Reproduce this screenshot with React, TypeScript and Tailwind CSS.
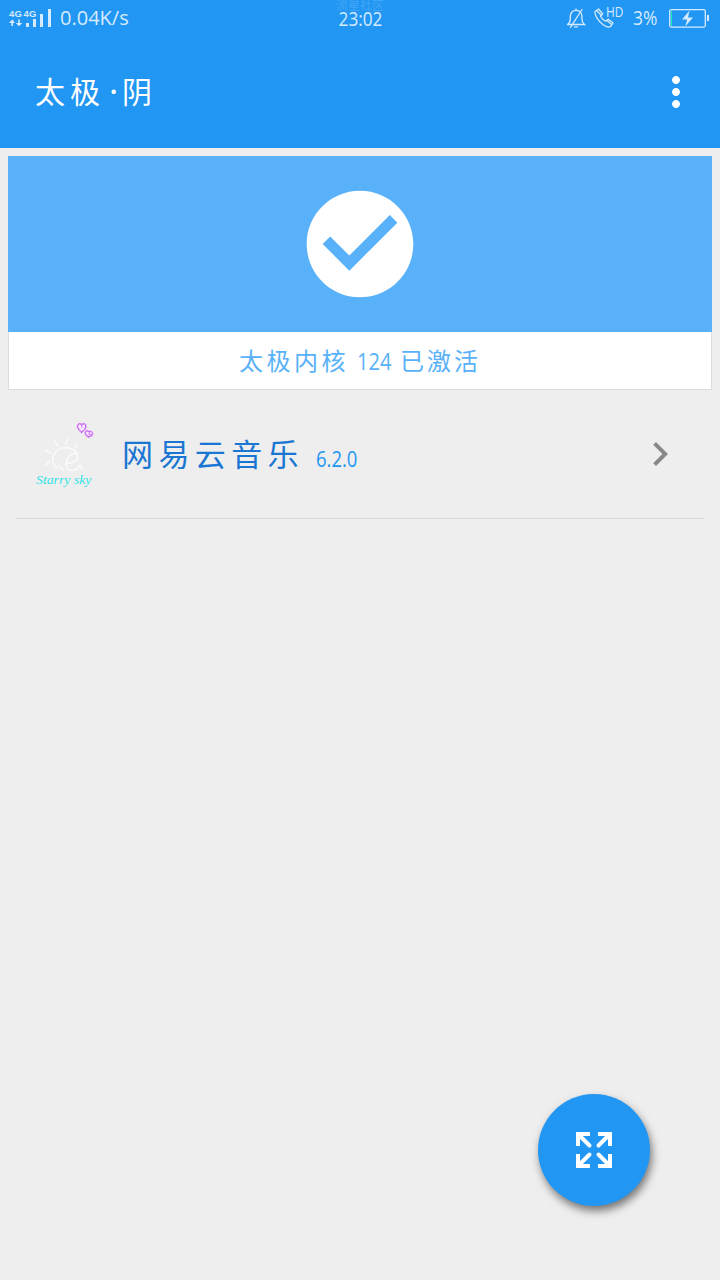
import type { ReactNode } from "react";
import { MdCheckCircle, MdChevronRight, MdMoreVert } from "react-icons/md";

const apps = [{ name: "网易云音乐", version: "6.2.0" }];

function SignalIcon() {
  return (
    <svg className="h-[18px] w-[42px]" viewBox="0 0 42 18" fill="currentColor">
      {/* data arrows */}
      <path d="M3.200 10.500 6.200 14H4v3H2.400v-3H0z" />
      <path d="M10 17.200 6.800 14h2.400v-3.400h1.600V14h2.400z" />
      {/* bars */}
      <path d="M17 14h3v4h-3zM24 10h3v8h-3zM31 5h3v13h-3zM39 0h3v18h-3z" />
    </svg>
  );
}

function MutedBellIcon() {
  return (
    <svg className="h-5 w-5" viewBox="0 0 20 20" fill="none" stroke="currentColor" strokeWidth="1.300" strokeLinecap="round">
      <path d="M1 16.500h17.500c-1.800-1.600-2.600-3.200-2.600-5.500V8.500C15.900 5 14 2.300 10.200 2.300S4.500 5 4.300 8.500V11c0 2.300-1 4.300-2.800 5.500z" />
      <path d="M10 2.200V1M8.500 18.800h3M4.500 19.300 16 1.500" />
    </svg>
  );
}

function CallIcon() {
  return (
    <svg className="h-5 w-5" viewBox="0 0 20 20" fill="none" stroke="currentColor" strokeWidth="1.300" strokeLinejoin="round">
      <path d="M1 3.500 4.500 1 8.700 5.800 6.500 8.200c1 2 3 3.900 5.300 5l2.400-2 4.900 3.700-2.700 3.700c-1.300 1-4.100.2-7.200-1.900C4.500 13.500.6 7.500 1 3.500z" />
      <path d="m2.500 2.500 4.800 4.700M12.800 12.200l4.800 4.300" />
    </svg>
  );
}

function BatteryIcon() {
  return (
    <svg className="h-[19px] w-10" viewBox="0 0 40 19">
      <rect x=".7" y=".7" width="35.600" height="17.400" rx="1.500" fill="none" stroke="currentColor" strokeWidth="1.300" />
      <path d="M2 2h1v15H2z" fill="#1de9b6" />
      <path d="M38 6h2v6h-2z" fill="currentColor" />
      <path d="M20.500 1.500 13 10.500h5.200L16.200 17.500 24 8.500h-5z" fill="currentColor" />
    </svg>
  );
}

function ExpandIcon() {
  return (
    <svg className="size-9" viewBox="0 0 36 36" fill="none" stroke="currentColor" strokeWidth="4">
      <path d="M14 2H2v12M22 2h12v12M14 34H2V22M22 34h12V22" />
      <path d="m3 3 10.500 10.500M33 3 22.500 13.500M3 33l10.500-10.500M33 33 22.500 22.500" strokeLinecap="round" />
    </svg>
  );
}

function Hearts() {
  return (
    <>
      <path d="M185 66c-6-5-12-11-12-18 0-6 8-9 12-3 4-5 12-3 12 3 0 8-6 13-12 18z" />
      <path d="M205 80c-6-3-9-8-8-13s7-6 10-1c5-3 10 0 10 5s-6 8-12 9z" />
    </>
  );
}

function StarrySkyIcon() {
  return (
    <div className="relative h-20 w-[72px] shrink-0">
      <svg className="h-full w-full" viewBox="30 12 216 240" fill="none" strokeLinecap="round">
        <g stroke="#fafafa" strokeWidth="5">
          <path d="M112 174c-12-6-16-20-13-33 5-18 20-28 37-28 16 0 29 7 35 20" />
          <path d="M118 168c2 6 6 9 11 10" />
          <path d="M143 160c18 0 30-9 30-20 0-12-17-13-26-1-11 14-12 35 0 41 10 4 24 0 31-12" />
          <path d="m104 94 8 12M142 87l-4 13M171 105l-6 7M78 121l15 8M78 164l11-10M181 165l5 13" />
        </g>
        <g stroke="#dda6f7" strokeWidth="7">
          <Hearts />
        </g>
        <g stroke="#c455ee" strokeWidth="3" fill="#fbeaff">
          <Hearts />
        </g>
        <path d="m185 46 1 6M207 68v5l5 1" stroke="#c455ee" strokeWidth="2.500" />
      </svg>
      <span className="absolute top-[58px] left-[6px] origin-left scale-x-[1.060] font-['Liberation_Serif',serif] text-[13px] leading-4 whitespace-nowrap text-[#31e3e6] italic">
        Starry sky
      </span>
    </div>
  );
}

function StatusBar() {
  return (
    <div className="relative flex h-9 items-center justify-between pr-[11px] pl-[9px] text-[#d6ebfd]">
      <div className="flex items-center">
        <div className="relative">
          <SignalIcon />
          <span className="absolute top-0 left-0 origin-left font-['Liberation_Sans',sans-serif] text-[9.500px] leading-[9px] font-bold tracking-[0.200px] whitespace-nowrap">
            4G<span className="ml-[1.500px]">4G</span>
          </span>
        </div>
        <span className="ml-[9px] w-[69px] origin-left text-[20px] leading-6 whitespace-nowrap">0.04K/s</span>
      </div>
      <div className="absolute inset-x-0 top-0 flex flex-col items-center">
        <span className="h-3 text-xs leading-3 text-[#41a5f7]">流星社区</span>
        <span className="scale-x-[0.860] text-[20px] leading-[14px]">23:02</span>
      </div>
      <div className="flex items-center">
        <MutedBellIcon />
        <span className="ml-2">
          <CallIcon />
        </span>
        <span className="-mt-3 -ml-2 w-[18px] origin-left scale-x-[0.850] text-[14px] leading-4">HD</span>
        <span className="ml-[9px] w-9 origin-left scale-x-[0.870] text-[20px] leading-6">3%</span>
        <BatteryIcon />
      </div>
    </div>
  );
}

function Latin({ children, className }: { children: ReactNode; className: string }) {
  return <span className={`inline-block origin-left whitespace-nowrap ${className}`}>{children}</span>;
}

export default function App() {
  return (
    <div className="relative flex h-[1280px] w-[720px] flex-col overflow-hidden bg-[#eee] font-['Open_Sans','Noto_Sans_CJK_SC',sans-serif]">
      <header className="h-[148px] shrink-0 bg-[#2196f3] text-white">
        <StatusBar />
        <div className="flex h-28 items-center justify-between pr-5 pl-[35px]">
          <h1 className="flex text-[30px] leading-9 font-normal">
            <span className="tracking-[5px]">太极</span>
            <span className="w-[17px] text-center font-semibold">·</span>
            <span>阴</span>
          </h1>
          <button aria-label="更多">
            <MdMoreVert className="size-12" />
          </button>
        </div>
      </header>

      <main className="flex flex-col">
        <section className="mx-2 mt-2">
          <div className="flex h-44 items-center justify-center bg-[#58b1f9] text-white">
            <MdCheckCircle className="size-32" />
          </div>
          <div className="flex h-[58px] items-center justify-center border border-t-0 border-[#dcdcdc] bg-white text-[24px] leading-8 text-[#58b1f9]">
            <span className="tracking-[3.500px]">太极内核</span>
            <Latin className="ml-2 w-[43px] scale-x-[0.840]">124</Latin>
            <span className="tracking-[3px]">已激活</span>
          </div>
        </section>

        {apps.map((app) => (
          <div key={app.name} className="mx-4 flex h-[129px] items-center border-b border-[#dadada] pl-[14px]">
            <StarrySkyIcon />
            <span className="ml-5 text-[31px] leading-10 tracking-[5.400px] text-[#1976d2]">{app.name}</span>
            <Latin className="mt-[8px] ml-[12px] scale-x-[0.840] text-[22px] leading-7 text-[#2196f3]">{app.version}</Latin>
            <MdChevronRight className="mr-5 ml-auto size-12 text-[#888]" />
          </div>
        ))}
      </main>

      <button
        aria-label="展开"
        className="absolute right-[70px] bottom-[74px] flex size-28 items-center justify-center rounded-full bg-[#2196f3] text-white shadow-[2px_5px_8px_rgba(0,0,0,0.500)]"
      >
        <ExpandIcon />
      </button>
    </div>
  );
}
